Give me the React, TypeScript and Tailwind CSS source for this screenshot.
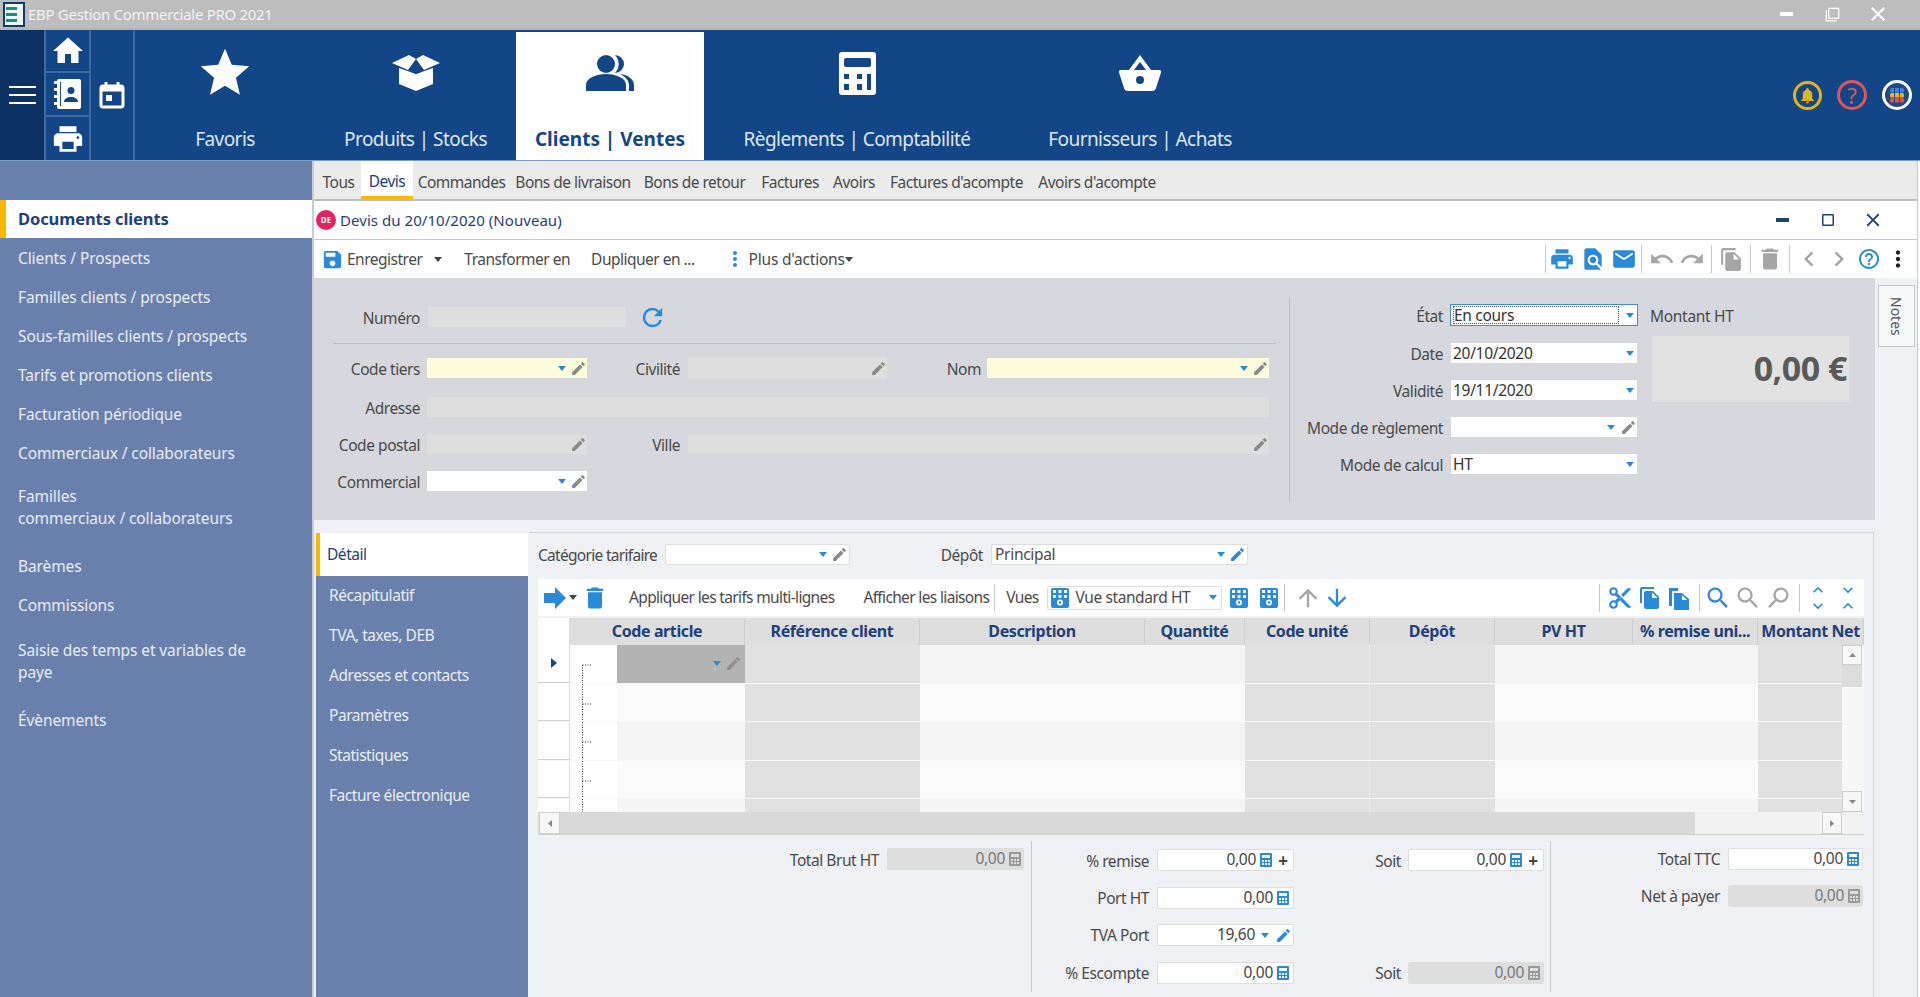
import React from "react";
import { MdHome, MdPrint, MdSave, MdEmail, MdUndo, MdRedo, MdDelete, MdFileCopy, MdSearch, MdEdit, MdArrowUpward, MdArrowDownward, MdMoreVert, MdHelpOutline, MdRefresh, MdContentCut, MdStar, MdNotifications, MdClose, MdChevronLeft, MdChevronRight, MdExpandLess, MdExpandMore, MdFindInPage, MdFilterNone, MdCropSquare } from "react-icons/md";

const Caret = ({ c = "#2a8ad8" }: { c?: string }) => (
  <svg width="8" height="5" viewBox="0 0 8 5" className="shrink-0"><path d="M0 0h8L4 5z" fill={c} /></svg>
);
const Sep = () => <div className="w-px h-[28px] bg-[#c9c9c9] mx-[5px] shrink-0" />;
const Sp = () => <div className="w-px h-[28px] bg-[#c9c9c9] shrink-0" />;
const Cell = ({ className, children }: { className: string; children: React.ReactNode }) => (
  <div className={`flex items-center justify-center shrink-0 ${className}`}>{children}</div>
);
const CalcMini = ({ c = "#2a8ad8" }: { c?: string }) => (
  <svg width="12" height="14" viewBox="0 0 12 14" className="shrink-0">
    <path fillRule="evenodd" d="M1 0h10a1 1 0 0 1 1 1v12a1 1 0 0 1-1 1H1a1 1 0 0 1-1-1V1a1 1 0 0 1 1-1zM2 2v3h8V2zM2 7v2h2V7zM5 7v2h2V7zM8 7v2h2V7zM2 10v2h2v-2zM5 10v2h2v-2zM8 10v2h2v-2z" fill={c} />
  </svg>
);
const Plus = () => <span className="text-[#444] font-bold text-[17px] leading-none w-[14px] text-center">+</span>;

const BoxIcon = () => (
  <svg width="48" height="36" viewBox="0 0 48 36" fill="#fff">
    <path d="M7 13l17 6 17-6v16l-17 7-17-7z" />
    <path d="M0 8L17 0l7 4-8 11zM48 8L31 0l-7 4 8 11z" />
    <path d="M24 8l-5 9 5 2 5-2z" fill="#134686" />
  </svg>
);
const PeopleIcon = () => (
  <svg width="48" height="36" viewBox="0 0 48 36" fill="#134686">
    <circle cx="20" cy="9" r="9" />
    <path d="M0 36v-6c0-7 10-11 20-11s20 4 20 11v6z" />
    <path d="M29 0a9 9 0 0 1 0 18 13 13 0 0 0 0-18z" />
    <path d="M34 19c8 1 14 5 14 11v6h-5v-6c0-4-3-8-9-11z" />
  </svg>
);
const CalcIcon = () => (
  <svg width="37" height="43" viewBox="0 0 37 43">
    <path fillRule="evenodd" fill="#fff" d="M3 0h31a3 3 0 0 1 3 3v37a3 3 0 0 1-3 3H3a3 3 0 0 1-3-3V3a3 3 0 0 1 3-3zM7 6a2 2 0 0 0-2 2v5a2 2 0 0 0 2 2h23a2 2 0 0 0 2-2V8a2 2 0 0 0-2-2zM5 22v5h5v-5zM18 22v5h5v-5zM28 22v16h4V22zM5 32v6h5v-6zM18 32v6h5v-6z" />
  </svg>
);
const BasketIcon = () => (
  <svg width="42" height="36" viewBox="0 0 42 36">
    <path fillRule="evenodd" fill="#fff" d="M21 0l11 15h8a2 2 0 0 1 2 2.400L37 33a4 4 0 0 1-4 3H9a4 4 0 0 1-4-3L0 17.400A2 2 0 0 1 2 15h8zM21 7l-6 8h12zM21 21a4 4 0 1 0 0 8 4 4 0 0 0 0-8z" />
  </svg>
);
const BookIcon = () => (
  <svg width="28" height="30" viewBox="0 0 28 30">
    <path fillRule="evenodd" fill="#fff" d="M5 0h20a2 2 0 0 1 2 2v26a2 2 0 0 1-2 2H5a2 2 0 0 1-2-2v-2H0v-3h3v-4H0v-3h3v-4H0V9h3V5H0V2h3a2 2 0 0 1 2-2zM17 8a3.500 3.500 0 1 0 0 7 3.500 3.500 0 0 0 0-7zM10 23h14c0-3-3-5-7-5s-7 2-7 5zM6 3v24h1V3z" />
  </svg>
);
const CalIcon = () => (
  <svg width="26" height="28" viewBox="0 0 26 28" fill="none">
    <rect x="2" y="5" width="22" height="21" rx="2" stroke="#fff" strokeWidth="3" />
    <path d="M2 8h22" stroke="#fff" strokeWidth="5" />
    <path d="M7 1v5M19 1v5" stroke="#fff" strokeWidth="3" />
    <rect x="7" y="14" width="6" height="6" fill="#fff" />
  </svg>
);
const Logo = () => (
  <svg width="22" height="25" viewBox="0 0 22 25">
    <rect width="22" height="25" fill="#123a6b" />
    <rect x="2" y="2" width="18" height="21" fill="#eef5f3" />
    <path d="M3 5h11v3H3zM3 11h11v3H3zM3 17h11v3H3z" fill="#16917e" />
  </svg>
);
const AppsDots = () => (
  <svg width="30" height="30" viewBox="0 0 30 30">
    <circle cx="15" cy="15" r="13.500" fill="#1f4a86" stroke="#fff" strokeWidth="3" />
    <rect x="8" y="8" width="14" height="4.500" rx="1.500" fill="#3f82d6" />
    <rect x="8" y="13" width="14" height="4.500" rx="1.500" fill="#e9b61e" />
    <rect x="8" y="18" width="14" height="4.500" rx="1.500" fill="#d9534f" />
    <path d="M12.500 8v15M17.500 8v15" stroke="#1f4a86" strokeWidth="1" />
  </svg>
);
const Grid1 = ({ c = "#2a8ad8" }: { c?: string }) => (
  <svg width="18" height="20" viewBox="0 0 18 20">
    <rect width="18" height="20" rx="2" fill={c} />
    {[2, 7.5, 13].map((x) => [2, 7].map((y) => <rect key={`${x}-${y}`} x={x} y={y} width="3" height="3" fill="#fff" />))}
    <circle cx="9" cy="14.500" r="3" fill="#fff" />
    <circle cx="9" cy="14.500" r="1.200" fill={c} />
  </svg>
);
const Paste = () => (
  <svg width="20" height="24" viewBox="0 0 20 24" fill="#2a8ad8">
    <path d="M0 2h9v3H4a1 1 0 0 0-1 1v14H0z" />
    <path fillRule="evenodd" d="M5 7h8l7 6v11H5zM13 9v5h5z" />
  </svg>
);

const ff = "font-['Noto_Sans','Open_Sans',sans-serif]";

const Label = ({ className, children }: { className: string; children: React.ReactNode }) => (
  <div className={`text-right text-[#4a4a4a] text-[15.500px] leading-[20px] shrink-0 tracking-[-0.45px] whitespace-nowrap ${className}`}>{children}</div>
);
const Field = ({ className, children }: { className: string; children?: React.ReactNode }) => (
  <div className={`flex items-center justify-end shrink-0 text-[15.500px] tracking-[-0.3px] whitespace-nowrap ${className}`}>{children}</div>
);
const Pen = ({ c = "#8a8a8a" }: { c?: string }) => <MdEdit size={17} color={c} className="shrink-0" />;

const Nav = ({ label, icon, active, className }: { label: string; icon: React.ReactNode; active?: boolean; className: string }) => (
  <div className={`mt-[2px] h-[128px] flex flex-col items-center shrink-0 ${active ? "bg-white" : ""} ${className}`}>
    <div className="h-[40px] mt-[21px] flex items-center justify-center">{icon}</div>
    <div className={`mt-[33px] text-[19px] leading-[26px] ${active ? "font-bold text-[#134686]" : "text-[#dde5f0] tracking-[-0.55px]"}`}>{label}</div>
  </div>
);

const subTabs: [string, string][] = [
  ["Tous", "w-[45px]"],
  ["Devis", "w-[52px]"],
  ["Commandes", "w-[97px]"],
  ["Bons de livraison", "w-[126px]"],
  ["Bons de retour", "w-[117px]"],
  ["Factures", "w-[74px]"],
  ["Avoirs", "w-[54px]"],
  ["Factures d'acompte", "w-[151px]"],
  ["Avoirs d'acompte", "w-[130px]"],
];
const sideItems = ["Clients / Prospects", "Familles clients / prospects", "Sous-familles clients / prospects", "Tarifs et promotions clients", "Facturation périodique", "Commerciaux / collaborateurs"];
const detailTabs = ["Récapitulatif", "TVA, taxes, DEB", "Adresses et contacts", "Paramètres", "Statistiques", "Facture électronique"];
const headers: [string, string][] = [
  ["Code article", "w-[175px]"],
  ["Référence client", "w-[175px]"],
  ["Description", "w-[225px]"],
  ["Quantité", "w-[100px]"],
  ["Code unité", "w-[125px]"],
  ["Dépôt", "w-[125px]"],
  ["PV HT", "w-[138px]"],
  ["% remise uni...", "w-[125px]"],
  ["Montant Net", "w-[106px]"],
];

const Tree = ({ first }: { first: boolean }) => (
  <svg width="47" height="39" viewBox="0 0 47 39" className="shrink-0">
    <path d={first ? "M12.500 20V39M12.500 20H22" : "M12.500 0V39M12.500 20H22"} stroke="#333" strokeWidth="1" strokeDasharray="1 1.500" fill="none" />
  </svg>
);

const Row = ({ i }: { i: number }) => {
  const base = i % 2 === 0 ? "bg-[#f5f5f5]" : "bg-[#fbfbfb]";
  const gray = "bg-[#e1e1e1]";
  return (
    <div className="flex h-[38.600px] shrink-0 border-b border-[#f8f8f8]">
      <div className="w-[32px] shrink-0 bg-white flex items-center justify-center border-r border-[#dcdcdc] border-b border-b-[#cfcfcf]">
        {i === 0 && <svg width="6" height="10" viewBox="0 0 6 10"><path d="M0 0l6 5-6 5z" fill="#134686" /></svg>}
      </div>
      <div className="w-[47px] shrink-0 bg-white overflow-hidden"><Tree first={i === 0} /></div>
      <div className={`w-[128px] shrink-0 flex items-center justify-end gap-[4px] pr-[3px] ${i === 0 ? "bg-[#b3b3b3]" : base}`}>
        {i === 0 && <><Caret /><Pen c="#8f8f8f" /></>}
      </div>
      <div className={`w-[175px] shrink-0 ${gray}`} />
      <div className={`w-[225px] shrink-0 ${base}`} />
      <div className={`w-[100px] shrink-0 ${base}`} />
      <div className={`w-[125px] shrink-0 ${gray} border-r border-[#ebebeb]`} />
      <div className={`w-[125px] shrink-0 ${gray}`} />
      <div className={`w-[138px] shrink-0 ${base}`} />
      <div className={`w-[125px] shrink-0 ${base}`} />
      <div className={`w-[84px] shrink-0 ${gray}`} />
    </div>
  );
};

const SBtn = ({ className, children }: { className: string; children: React.ReactNode }) => (
  <div className={`bg-[#f7f7f7] border border-[#cfcfcf] flex items-center justify-center shrink-0 ${className}`}>{children}</div>
);
const white = "bg-white rounded-[2px] border border-[#dedede]";
const dis = "bg-[#dedede] rounded-[2px]";

export default function App() {
  return (
    <div className={`w-[1920px] h-[997px] overflow-hidden flex flex-col bg-white ${ff}`}>
      {/* title bar */}
      <div className="h-[30px] shrink-0 bg-[#bdbdbd] border-b-2 border-[#b6b6b6] flex items-center text-[#f2f2f2]">
        <div className="ml-[3px]"><Logo /></div>
        <div className="ml-[3px] text-[15px] tracking-[-0.3px]">EBP Gestion Commerciale PRO 2021</div>
        <div className="ml-auto flex items-center">
          <div className="w-[46px] flex justify-center"><div className="w-[13px] h-[4px] bg-white" /></div>
          <div className="w-[46px] flex justify-center"><MdFilterNone size={15} color="#fff" /></div>
          <div className="w-[46px] mr-[19px] flex justify-center"><MdClose size={24} color="#fff" /></div>
        </div>
      </div>

      {/* nav */}
      <div className="h-[131px] shrink-0 bg-[#134686] flex border-b border-[#7d9cc6]">
        <div className="w-[44px] shrink-0 bg-[#0e3163] flex flex-col items-center justify-center gap-[6px]">
          <div className="w-[27px] h-[2px] bg-white" /><div className="w-[27px] h-[2px] bg-white" /><div className="w-[27px] h-[2px] bg-white" />
        </div>
        <div className="w-[47px] shrink-0 flex flex-col border-l-2 border-r-2 border-[#3f689d]">
          <div className="h-[43px] flex items-center justify-center border-b-2 border-[#3f689d]"><MdHome size={36} color="#fff" /></div>
          <div className="h-[44px] flex items-center justify-center border-b-2 border-[#3f689d]"><BookIcon /></div>
          <div className="flex-1 flex items-center justify-center"><MdPrint size={34} color="#fff" /></div>
        </div>
        <div className="w-[44px] shrink-0 flex items-center justify-center border-r-2 border-[#3f689d]"><CalIcon /></div>
        <Nav className="w-[180px]" label="Favoris" icon={<MdStar size={58} color="#fff" />} />
        <Nav className="w-[201px]" label="Produits | Stocks" icon={<BoxIcon />} />
        <Nav className="w-[188px]" active label="Clients | Ventes" icon={<PeopleIcon />} />
        <Nav className="w-[306px]" label="Règlements | Comptabilité" icon={<CalcIcon />} />
        <Nav className="w-[260px]" label="Fournisseurs | Achats" icon={<BasketIcon />} />
        <div className="flex-1 flex items-center justify-end gap-[15px] pr-[8px]">
          <div className="w-[29px] h-[29px] rounded-full border-[3px] border-[#e3b21c] flex items-center justify-center"><MdNotifications size={19} color="#e3b21c" /></div>
          <div className="w-[30px] h-[30px] rounded-full border-[3px] border-[#e0555a] flex items-center justify-center text-[#e0555a] text-[22px] leading-none">?</div>
          <AppsDots />
        </div>
      </div>

      {/* body */}
      <div className="flex-1 flex min-h-0">
        {/* sidebar */}
        <div className="w-[314px] shrink-0 bg-[#6a80ac] flex flex-col border-r-2 border-[#c7ccd6] text-[#e8ecf3] text-[15.500px] tracking-[-0.1px]">
          <div className="h-[39px] shrink-0" />
          <div className="h-[38px] shrink-0 bg-white border-l-[6px] border-[#fbb800] flex items-center pl-[12px] pt-[1px] font-bold text-[16.500px] text-[#1f4079]">Documents clients</div>
          <div className="h-[1px] shrink-0" />
          {sideItems.map((t) => (
            <div key={t} className="h-[39px] shrink-0 flex items-center pl-[18px]">{t}</div>
          ))}
          <div className="h-[68px] shrink-0 flex items-center pl-[18px] leading-[22px]">Familles<br />commerciaux / collaborateurs</div>
          <div className="h-[45px] pt-[6px] shrink-0 flex items-center pl-[18px]">Barèmes</div>
          <div className="h-[39px] shrink-0 flex items-center pl-[18px]">Commissions</div>
          <div className="h-[72px] shrink-0 flex items-center pl-[18px] pr-[40px] leading-[22px]">Saisie des temps et variables de paye</div>
          <div className="h-[44px] pt-[4px] shrink-0 flex items-center pl-[18px]">Évènements</div>
        </div>

        {/* main */}
        <div className="flex-1 min-w-0 flex flex-col mr-[2px] border-r border-[#c9c9c9]">
          <div className="h-[40px] shrink-0 bg-[#ebebeb] border-b-2 border-[#bdbdbd] flex items-stretch pl-[2px] text-[#4a4a4a] text-[15.500px] tracking-[-0.5px]">
            {subTabs.map(([t, w]) => (
              <div key={t} className={`${w} shrink-0 flex items-center justify-center whitespace-nowrap ${t === "Devis" ? "bg-white text-[#1f4079] border-b-[3px] border-[#fbb800] pt-[6px]" : "pt-[5px]"}`}>{t}</div>
            ))}
          </div>
          <div className="h-[39px] shrink-0 bg-white border-b border-[#c9c9c9] flex items-center pl-[2px] pr-[33px] text-[#1f4079] text-[15px] tracking-[0.05px]">
            <div className="w-[20px] h-[20px] rounded-full bg-[#e6215f] text-white text-[8px] font-bold flex items-center justify-center">DE</div>
            <div className="ml-[4px]">Devis du 20/10/2020 (Nouveau)</div>
            <div className="ml-auto flex items-center">
              <div className="w-[13px] h-[4px] bg-[#1f4079]" />
              <MdCropSquare size={18} color="#1f4079" className="ml-[30px]" />
              <MdClose size={22} color="#1f4079" className="ml-[25px]" />
            </div>
          </div>
          <div className="h-[38px] shrink-0 bg-white flex items-center pl-[7px] pr-[5px] text-[#4a4a4a] text-[15.500px] tracking-[-0.5px]">
            <MdSave size={23} color="#2a8ad8" />
            <span className="ml-[3px] pt-[2px]">Enregistrer</span>
            <span className="ml-[12px]"><Caret c="#444" /></span>
            <span className="ml-[22px] pt-[2px]">Transformer en</span>
            <span className="ml-[21px] pt-[2px]">Dupliquer en ...</span>
            <span className="ml-[28px]"><MdMoreVert size={24} color="#2a8ad8" /></span>
            <span className="ml-[2px] pt-[2px] tracking-[-0.2px]">Plus d'actions</span>
            <Caret c="#444" />
            <div className="ml-auto flex items-center">
              <Sp />
              <Cell className="w-[31px]"><MdPrint size={26} color="#2a8ad8" /></Cell>
              <Cell className="w-[31px]"><MdFindInPage size={26} color="#2a8ad8" /></Cell>
              <Cell className="w-[31px]"><MdEmail size={26} color="#2a8ad8" /></Cell>
              <div className="ml-[2px]"><Sp /></div>
              <Cell className="w-[30px] ml-[5px]"><MdUndo size={26} color="#a6a6a6" /></Cell>
              <Cell className="w-[30px]"><MdRedo size={26} color="#a6a6a6" /></Cell>
              <div className="ml-[4px]"><Sp /></div>
              <Cell className="w-[38px]"><MdFileCopy size={25} color="#a6a6a6" /></Cell>
              <Sp />
              <Cell className="w-[38px]"><MdDelete size={28} color="#a6a6a6" /></Cell>
              <Sp />
              <Cell className="w-[30px] ml-[4px]"><MdChevronLeft size={36} color="#a6a6a6" /></Cell>
              <Cell className="w-[30px]"><MdChevronRight size={36} color="#a6a6a6" /></Cell>
              <Cell className="w-[30px]"><MdHelpOutline size={24} color="#2a8ad8" /></Cell>
              <Cell className="w-[28px]"><MdMoreVert size={26} color="#222" /></Cell>
            </div>
          </div>

          <div className="flex-1 min-h-0 flex">
            <div className="w-[1561px] shrink-0 flex flex-col">
              {/* form */}
              <div className="h-[242px] shrink-0 bg-[#d6d8de] flex items-start">
                <div className="w-[975px] shrink-0 pl-[19px] pt-[29px]">
                  <div className="flex items-center h-[20px]">
                    <Label className="w-[87px] pt-[2px]">Numéro</Label>
                    <Field className={`ml-[8px] w-[198px] h-[20px] ${dis}`} />
                    <MdRefresh size={29} color="#2a8ad8" className="ml-[12px]" />
                  </div>
                  <div className="mt-[16px] w-[943px] h-[1px] bg-[#bcbfc6]" />
                  <div className="mt-[14px] flex items-center h-[20px]">
                    <Label className="w-[87px] pt-[2px]">Code tiers</Label>
                    <Field className="ml-[7px] w-[160px] h-[20px] bg-[#fdfdde] gap-[4px]"><Caret /><Pen /></Field>
                    <Label className="w-[93px] pt-[2px]">Civilité</Label>
                    <Field className={`ml-[8px] w-[199px] h-[20px] ${dis}`}><Pen /></Field>
                    <Label className="w-[94px] pt-[2px]">Nom</Label>
                    <Field className="ml-[6px] w-[282px] h-[20px] bg-[#fdfdde] gap-[4px]"><Caret /><Pen /></Field>
                  </div>
                  <div className="mt-[19px] flex items-center h-[20px]">
                    <Label className="w-[87px] pt-[2px]">Adresse</Label>
                    <Field className={`ml-[7px] w-[842px] h-[20px] ${dis}`} />
                  </div>
                  <div className="mt-[17px] flex items-center h-[20px]">
                    <Label className="w-[87px] pt-[2px]">Code postal</Label>
                    <Field className={`ml-[7px] w-[160px] h-[20px] ${dis}`}><Pen /></Field>
                    <Label className="w-[93px] pt-[2px]">Ville</Label>
                    <Field className={`ml-[8px] w-[581px] h-[20px] ${dis}`}><Pen /></Field>
                  </div>
                  <div className="mt-[17px] flex items-center h-[20px]">
                    <Label className="w-[87px] pt-[2px]">Commercial</Label>
                    <Field className="ml-[7px] w-[160px] h-[20px] bg-white gap-[4px]"><Caret /><Pen /></Field>
                  </div>
                </div>
                <div className="mt-[19px] h-[205px] flex-1 border-l border-[#bcbfc6] flex">
                  <div className="w-[348px] shrink-0 pt-[7px]">
                    <div className="flex items-center h-[22px]">
                      <Label className="w-[153px] pt-[2px]">État</Label>
                      <Field className="ml-[7px] w-[188px] h-[22px] bg-white border border-[#3f8bd8] !justify-between pl-[2px] pr-[3px] text-[#333]">
                        <span className="border border-dotted border-[#555] flex-1 mr-[7px] h-[18px] leading-[16px]">En cours</span><Caret />
                      </Field>
                    </div>
                    {[
                      ["Date", "20/10/2020", false],
                      ["Validité", "19/11/2020", false],
                      ["Mode de règlement", "", true],
                      ["Mode de calcul", "HT", false],
                    ].map(([l, v, pen]) => (
                      <div key={String(l)} className="flex items-center h-[20px] mt-[17px]">
                        <Label className="w-[153px] pt-[2px]">{l}</Label>
                        <Field className="ml-[8px] w-[186px] h-[20px] bg-white !justify-between pl-[2px] text-[#333]">
                          <span className="pt-[1px]">{v}</span>
                          {pen ? <span className="flex items-center gap-[5px]"><Caret /><Pen /></span> : <span className="flex items-center pr-[3px]"><Caret /></span>}
                        </Field>
                      </div>
                    ))}
                  </div>
                  <div className="ml-[12px] pt-[8px]">
                    <div className="text-[15.500px] leading-[22px] text-[#4a4a4a] tracking-[-0.3px]">Montant HT</div>
                    <div className="mt-[9px] ml-[2px] w-[197px] h-[66px] bg-[#e2e2e2] flex items-center justify-end pr-[2px] pb-[1px] text-[#5a5a5a] text-[34px] font-bold tracking-[-0.5px]">0,00 €</div>
                  </div>
                </div>
              </div>

              {/* lower */}
              <div className="flex-1 min-h-0 bg-[#eff1f5] pt-[12px] pl-[2px] flex">
                <div className="w-[212px] shrink-0 bg-[#6a80ac] mt-[1px] text-[#e8ecf3] text-[15.500px] tracking-[-0.45px]">
                  <div className="h-[43px] bg-white border-l-[4px] border-[#fbb800] flex items-center pl-[7px] pt-[1px] text-[#1f4079]">Détail</div>
                  {detailTabs.map((t) => (
                    <div key={t} className="h-[40px] flex items-center pl-[13px]">{t}</div>
                  ))}
                </div>
                <div className="ml-[1px] w-[1345px] shrink-0 border-t border-r border-[#d5d7dc] pl-[9px] flex flex-col">
                  <div className="mt-[11px] h-[21px] flex items-center shrink-0">
                    <Label className="w-[120px] !text-left !tracking-[-0.7px]">Catégorie tarifaire</Label>
                    <Field className={`ml-[7px] w-[185px] h-[21px] gap-[4px] pr-[1px] ${white}`}><Caret /><Pen /></Field>
                    <Label className="w-[133px]">Dépôt</Label>
                    <Field className={`ml-[8px] w-[257px] h-[21px] !justify-between pl-[3px] pr-[1px] text-[#4a4a4a] ${white}`}>
                      <span>Principal</span><span className="flex items-center gap-[4px]"><Caret /><Pen c="#2a8ad8" /></span>
                    </Field>
                  </div>
                  <div className="mt-[14px] w-[1326px] h-[37px] shrink-0 bg-white flex items-center pl-[6px] text-[#4a4a4a] text-[15.500px] tracking-[-0.65px]">
                    <svg width="24" height="22" viewBox="0 0 24 22"><path d="M0 6h11V0l11 11-11 11v-6H0z" fill="#2a8ad8" /></svg>
                    <span className="ml-[1px]"><Caret c="#444" /></span>
                    <MdDelete size={28} color="#2a8ad8" className="ml-[4px]" />
                    <span className="ml-[20px]">Appliquer les tarifs multi-lignes</span>
                    <span className="ml-[29px]">Afficher les liaisons</span>
                    <Sep />
                    <span className="ml-[6px]">Vues</span>
                    <div className="ml-[8px] w-[175px] h-[24px] border border-[#dedede] rounded-[2px] flex items-center pl-[3px] pr-[4px]">
                      <Grid1 />
                      <span className="ml-[7px] tracking-[-0.4px]">Vue standard HT</span>
                      <span className="ml-auto"><Caret /></span>
                    </div>
                    <span className="ml-[8px]"><Grid1 /></span>
                    <span className="ml-[12px]"><Grid1 /></span>
                    <span className="ml-[1px]"><Sep /></span>
                    <MdArrowUpward size={28} color="#a6a6a6" className="ml-[4px]" />
                    <MdArrowDownward size={28} color="#2a8ad8" className="ml-[1px]" />
                    <div className="ml-auto flex items-center pr-[1px]">
                      <Sp />
                      <Cell className="w-[30px] ml-[5px]"><MdContentCut size={26} color="#2a8ad8" /></Cell>
                      <Cell className="w-[29px]"><MdFileCopy size={24} color="#2a8ad8" /></Cell>
                      <Cell className="w-[30px]"><Paste /></Cell>
                      <div className="ml-[5px]"><Sp /></div>
                      <Cell className="w-[30px] ml-[3px]"><MdSearch size={28} color="#2a8ad8" /></Cell>
                      <Cell className="w-[30px]"><MdSearch size={28} color="#a6a6a6" /></Cell>
                      <Cell className="w-[30px]"><MdSearch size={28} color="#a6a6a6" className="-scale-x-100" /></Cell>
                      <div className="ml-[6px]"><Sp /></div>
                      <Cell className="w-[31px] ml-[2px] !flex-col"><MdExpandLess size={20} color="#2a8ad8" className="-mb-[4px]" /><MdExpandMore size={20} color="#2a8ad8" /></Cell>
                      <Cell className="w-[30px] !flex-col"><MdExpandMore size={20} color="#2a8ad8" className="-mb-[4px]" /><MdExpandLess size={20} color="#2a8ad8" /></Cell>
                    </div>
                  </div>

                  <div className="mt-[2px] w-[1326px] h-[217px] shrink-0 flex flex-col border-b border-[#cfcfcf]">
                    <div className="flex h-[27px] shrink-0 bg-[#dedede] text-[#1f4079] text-[16px] font-bold tracking-[-0.4px]">
                      <div className="w-[32px] shrink-0 bg-white border-r border-[#dcdcdc]" />
                      {headers.map(([t, w]) => (
                        <div key={t} className={`${w} shrink-0 flex items-center justify-center border-r border-[#cfcfcf] whitespace-nowrap overflow-hidden pb-[2px]`}>{t}</div>
                      ))}
                    </div>
                    <div className="h-[167px] shrink-0 flex overflow-hidden">
                      <div className="w-[1304px] shrink-0">
                        {[0, 1, 2, 3, 4].map((i) => <Row key={i} i={i} />)}
                      </div>
                      <div className="w-[22px] shrink-0 flex flex-col bg-[#f7f7f7] pr-[2px]">
                        <SBtn className="h-[20px]"><svg width="7" height="4" viewBox="0 0 7 4"><path d="M0 4l3.500-4 3.500 4z" fill="#888" /></svg></SBtn>
                        <div className="h-[22px] bg-[#dcdcdc] shrink-0" />
                        <div className="flex-1" />
                        <SBtn className="h-[21px]"><svg width="7" height="4" viewBox="0 0 7 4"><path d="M0 0l3.500 4 3.500-4z" fill="#888" /></svg></SBtn>
                      </div>
                    </div>
                    <div className="flex flex-1 bg-[#d9d9d9]">
                      <SBtn className="w-[21px] ml-[1px]"><svg width="4" height="7" viewBox="0 0 4 7"><path d="M4 0L0 3.500 4 7z" fill="#888" /></svg></SBtn>
                      <div className="flex-1" />
                      <div className="w-[127px] bg-[#f2f2f2] shrink-0" />
                      <SBtn className="w-[20px]"><svg width="4" height="7" viewBox="0 0 4 7"><path d="M0 0l4 3.500L0 7z" fill="#888" /></svg></SBtn>
                      <div className="w-[22px] bg-[#f2f2f2] shrink-0" />
                    </div>
                  </div>

                  {/* totals */}
                  <div className="mt-[6px] h-[151px] shrink-0 flex">
                    <div className="w-[493px] shrink-0 pt-[7px] flex">
                      <div className="flex items-start h-[22px]">
                        <Label className="w-[341px] leading-[24px]">Total Brut HT</Label>
                        <Field className={`ml-[8px] w-[137px] h-[22px] gap-[4px] pr-[3px] text-[#777] ${dis}`}>0,00 <CalcMini c="#999" /></Field>
                      </div>
                    </div>
                    <div className="w-[520px] shrink-0 border-l border-r border-[#c9c9c9] pt-[8px] flex flex-col gap-[15.500px]">
                      <div className="flex items-center h-[22px]">
                        <Label className="w-[117px] pt-[1px]">% remise</Label>
                        <Field className={`ml-[8px] w-[137px] h-[22px] gap-[4px] pr-[3px] text-[#444] ${white}`}>0,00 <CalcMini /><Plus /></Field>
                        <Label className="w-[107px] pt-[1px]">Soit</Label>
                        <Field className={`ml-[7px] w-[136px] h-[22px] gap-[4px] pr-[3px] text-[#444] ${white}`}>0,00 <CalcMini /><Plus /></Field>
                      </div>
                      <div className="flex items-center h-[22px]">
                        <Label className="w-[117px]">Port HT</Label>
                        <Field className={`ml-[8px] w-[137px] h-[22px] gap-[4px] pr-[4px] text-[#444] ${white}`}>0,00 <CalcMini /></Field>
                      </div>
                      <div className="flex items-center h-[22px]">
                        <Label className="w-[117px]">TVA Port</Label>
                        <Field className={`ml-[8px] w-[137px] h-[22px] gap-[6px] pr-[1px] text-[#444] ${white}`}>19,60 <Caret /><Pen c="#2a8ad8" /></Field>
                      </div>
                      <div className="flex items-center h-[22px]">
                        <Label className="w-[117px]">% Escompte</Label>
                        <Field className={`ml-[8px] w-[137px] h-[22px] gap-[4px] pr-[4px] text-[#444] ${white}`}>0,00 <CalcMini /></Field>
                        <Label className="w-[107px]">Soit</Label>
                        <Field className={`ml-[7px] w-[136px] h-[22px] gap-[4px] pr-[4px] text-[#777] ${dis}`}>0,00 <CalcMini c="#999" /></Field>
                      </div>
                    </div>
                    <div className="flex-1 pt-[7px] flex flex-col gap-[15px]">
                      <div className="flex items-center h-[22px]">
                        <Label className="w-[169px]">Total TTC</Label>
                        <Field className={`ml-[8px] w-[135px] h-[22px] gap-[4px] pr-[3px] text-[#444] ${white}`}>0,00 <CalcMini /></Field>
                      </div>
                      <div className="flex items-center h-[22px]">
                        <Label className="w-[169px]">Net à payer</Label>
                        <Field className={`ml-[8px] w-[135px] h-[22px] gap-[4px] pr-[3px] text-[#777] ${dis}`}>0,00 <CalcMini c="#999" /></Field>
                      </div>
                    </div>
                  </div>
                </div>
              </div>
            </div>
            {/* Notes */}
            <div className="flex-1 bg-[#eff1f5] pl-[3px] pt-[7px]">
              <div className="w-[37px] h-[62px] bg-[#f7f8fa] border border-[#c9c9c9] flex items-center justify-center text-[#555] text-[14px] [writing-mode:vertical-rl]">Notes</div>
            </div>
          </div>
        </div>
      </div>
    </div>
  );
}
